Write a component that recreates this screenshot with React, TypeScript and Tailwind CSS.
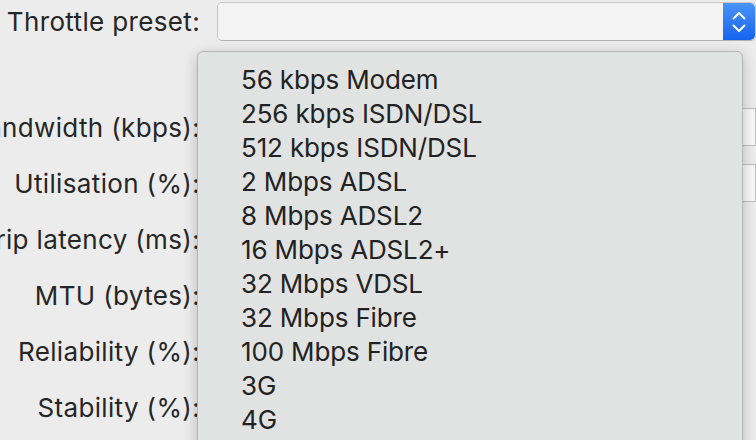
import { ReactNode } from "react";

const presets = [
  "56 kbps Modem",
  "256 kbps ISDN/DSL",
  "512 kbps ISDN/DSL",
  "2 Mbps ADSL",
  "8 Mbps ADSL2",
  "16 Mbps ADSL2+",
  "32 Mbps VDSL",
  "32 Mbps Fibre",
  "100 Mbps Fibre",
  "3G",
  "4G",
];

const fields = [
  { label: "Bandwidth (kbps):", input: true },
  { label: "Utilisation (%):", input: true },
  { label: "Round trip latency (ms):", input: false },
  { label: "MTU (bytes):", input: false },
  { label: "Reliability (%):", input: false },
  { label: "Stability (%):", input: false },
];

function Label({ children }: { children: ReactNode }) {
  return (
    <div className="flex w-[200px] shrink-0 justify-end whitespace-nowrap text-[26px] tracking-[0.35px] text-[#262626]">
      {children}
    </div>
  );
}

function Stepper() {
  return (
    <div className="flex w-[32px] shrink-0 items-center justify-center rounded-r-[5px] bg-gradient-to-b from-[#4a93f8] to-[#1463ef]">
      <svg width="16" height="26" viewBox="0 0 16 26" fill="none" stroke="white" strokeWidth="2" strokeLinecap="round" strokeLinejoin="round">
        <path d="M2.5 9.5 8 4l5.5 5.5" />
        <path d="M2.5 16.5 8 22l5.5-5.5" />
      </svg>
    </div>
  );
}

export default function App() {
  return (
    <div
      className="relative h-[440px] w-[756px] overflow-hidden bg-[#ececec]"
      style={{ fontFamily: "Inter, 'Liberation Sans', sans-serif" }}
    >
      <div className="flex flex-col pt-[2px]">
        <div className="flex h-[39px] items-center gap-[17px]">
          <Label>Throttle preset:</Label>
          <div className="flex h-[39px] flex-1 rounded-[5px] border border-[#c9c9c9] border-b-[#b3b3b3] bg-[#f3f3f3]">
            <div className="flex-1" />
            <Stepper />
          </div>
        </div>

        <div className="mt-[58px] flex flex-col">
          {fields.map((f) => (
            <div key={f.label} className="flex h-[56px] items-center gap-[17px]">
              <Label>{f.label}</Label>
              {f.input ? (
                <div className="h-[38px] flex-1 border border-[#bdbdbd] bg-[#f7f7f7]" />
              ) : null}
            </div>
          ))}
        </div>
      </div>

      <div className="absolute left-[197px] top-[51px] h-[400px] w-[546px] rounded-[6px] border border-[#b5b5b5] bg-[#e1e3e2] pt-[10px] shadow-[0_4px_14px_rgba(0,0,0,0.22)]">
        {presets.map((p) => (
          <div key={p} className="flex h-[34px] items-center pl-[43px] text-[26px] tracking-[-0.15px] text-[#222222]">
            {p}
          </div>
        ))}
      </div>
    </div>
  );
}
